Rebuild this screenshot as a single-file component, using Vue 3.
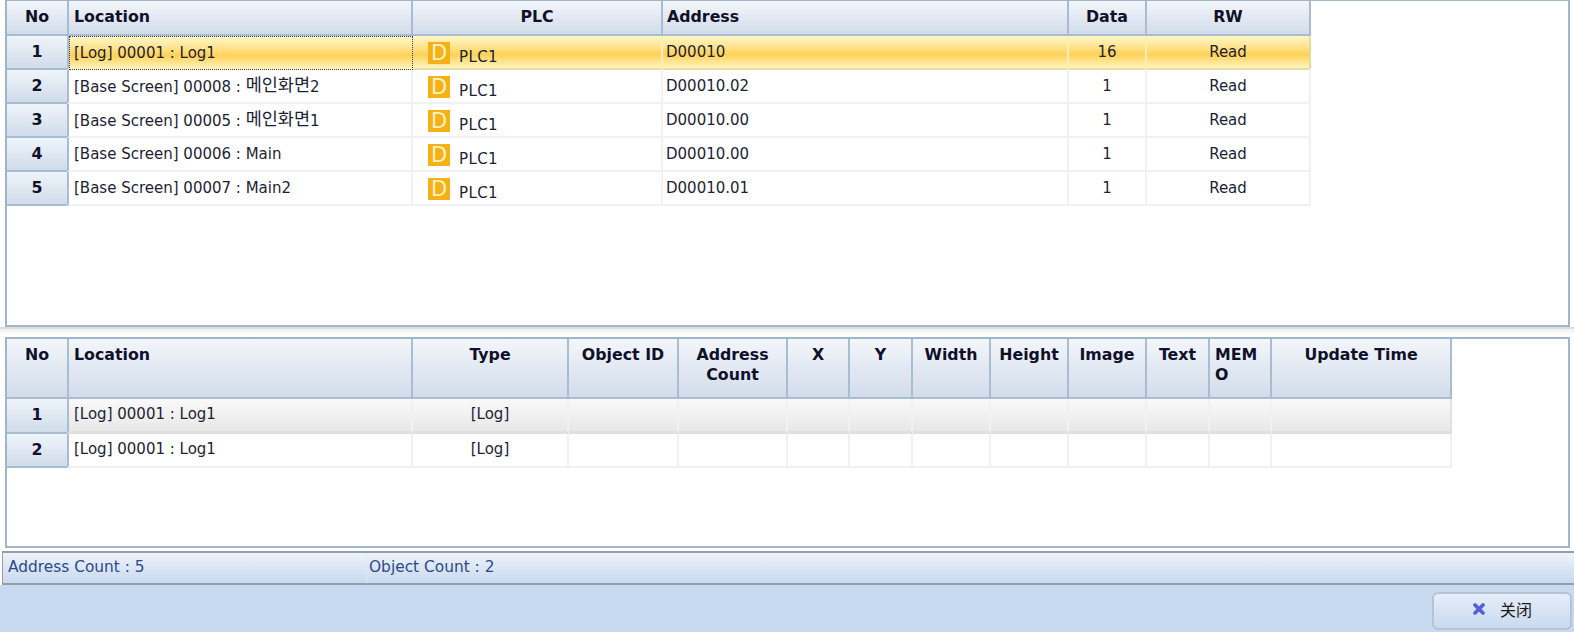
<script setup>
const topColumns = [
  { label: 'No', cls: 'center' },
  { label: 'Location', cls: 'left' },
  { label: 'PLC', cls: 'center' },
  { label: 'Address', cls: 'left addr' },
  { label: 'Data', cls: 'center' },
  { label: 'RW', cls: 'center' }
]
const topRows = [
  { no: 1, location: '[Log] 00001 : Log1', ko: '', tail: '', address: 'D00010', data: '16', rw: 'Read' },
  { no: 2, location: '[Base Screen] 00008 : ', ko: '메인화면', tail: '2', address: 'D00010.02', data: '1', rw: 'Read' },
  { no: 3, location: '[Base Screen] 00005 : ', ko: '메인화면', tail: '1', address: 'D00010.00', data: '1', rw: 'Read' },
  { no: 4, location: '[Base Screen] 00006 : Main', ko: '', tail: '', address: 'D00010.00', data: '1', rw: 'Read' },
  { no: 5, location: '[Base Screen] 00007 : Main2', ko: '', tail: '', address: 'D00010.01', data: '1', rw: 'Read' }
]
const bottomColumns = [
  { label: 'No', cls: 'center' },
  { label: 'Location', cls: 'left' },
  { label: 'Type', cls: 'center' },
  { label: 'Object ID', cls: 'center' },
  { label: 'Address Count', cls: 'center' },
  { label: 'X', cls: 'center' },
  { label: 'Y', cls: 'center' },
  { label: 'Width', cls: 'center' },
  { label: 'Height', cls: 'center' },
  { label: 'Image', cls: 'center' },
  { label: 'Text', cls: 'center' },
  { label: 'MEM O', cls: 'left memo' },
  { label: 'Update Time', cls: 'center' }
]
const bottomRows = [1, 2]
const emptyCells = Array.from({ length: 9 }, (_, i) => i)
</script>

<template>
  <div class="window">
    <section class="panel panel-top">
      <div class="grid grid-top">
        <div v-for="c in topColumns" :key="c.label" class="head" :class="c.cls">{{ c.label }}</div>
        <template v-for="(r, i) in topRows" :key="r.no">
          <div class="no">{{ r.no }}</div>
          <div class="cell first" :class="{ sel: i === 0, focus: i === 0 }">
            <span class="loc">{{ r.location }}<span v-if="r.ko" class="ko">{{ r.ko }}</span>{{ r.tail }}</span>
          </div>
          <div class="cell plc" :class="{ sel: i === 0 }">
            <span class="badge">D</span><span class="plc-name">PLC1</span>
          </div>
          <div class="cell address" :class="{ sel: i === 0 }">{{ r.address }}</div>
          <div class="cell center" :class="{ sel: i === 0 }">{{ r.data }}</div>
          <div class="cell center" :class="{ sel: i === 0, 'sel-end': i === 0 }">{{ r.rw }}</div>
        </template>
      </div>
    </section>

    <div class="splitter"></div>

    <section class="panel panel-bottom">
      <div class="grid grid-bottom">
        <div v-for="c in bottomColumns" :key="c.label" class="head tall" :class="c.cls">{{ c.label }}</div>
        <template v-for="n in bottomRows" :key="n">
          <div class="no">{{ n }}</div>
          <div class="cell first" :class="{ grey: n === 1 }">[Log] 00001 : Log1</div>
          <div class="cell center" :class="{ grey: n === 1 }">[Log]</div>
          <div
            v-for="e in emptyCells"
            :key="e"
            class="cell"
            :class="{ grey: n === 1 }"
          ></div>
          <div class="cell" :class="{ grey: n === 1, 'grey-end': n === 1 }"></div>
        </template>
      </div>
    </section>

    <div class="status">
      <div class="status-a">Address Count : 5</div>
      <div class="status-b">Object Count : 2</div>
    </div>

    <footer class="footer">
      <button class="close" type="button">
        <svg class="x" viewBox="0 0 14 14" width="14" height="14" aria-hidden="true">
          <path d="M3 3 L11 11 M11 3 L3 11" stroke="#5860d8" stroke-width="3.8" stroke-linecap="round" fill="none" />
        </svg>
        <span>关闭</span>
      </button>
    </footer>
  </div>
</template>

<style>
html, body { margin: 0; background: #fff; overflow: hidden; }
</style>

<style scoped>
.window {
  width: 1574px;
  height: 632px;
  display: flex;
  flex-direction: column;
  background: #fff;
  font-family: "DejaVu Sans", "Noto Sans CJK KR", sans-serif;
  font-size: 15px;
  color: #1e1e34;
  overflow: hidden;
}
.panel {
  margin: 0 4px 0 5px;
  background: #fff;
  border: 2px solid #9fb5cb;
  box-sizing: border-box;
  flex: none;
}
.panel-top { height: 327px; border-top-width: 1px; }
.panel-bottom { height: 211px; }
.splitter {
  height: 10px;
  flex: none;
  background: linear-gradient(#dcdcdc 0 2px, #f0f0f0 2px, #fff 8px);
}
.grid { display: grid; }
.grid-top {
  grid-template-columns: 62px 344px 250px 406px 78px 164px;
  grid-template-rows: 35px repeat(5, 34px);
  width: max-content;
}
.grid-bottom {
  grid-template-columns: 62px 344px 156px 110px 109px 62px 63px 78px 78px 78px 63px 62px 180px;
  grid-template-rows: 60px 35px 34px;
  width: max-content;
}
.head {
  box-sizing: border-box;
  background: linear-gradient(#f3f6fb, #d2dcea);
  border-right: 2px solid #a9bdd2;
  border-bottom: 2px solid #a9bdd2;
  font-weight: 700;
  font-size: 15.8px;
  line-height: 20px;
  color: #10102a;
  padding: 6px 5px 0;
}
.head.left { text-align: left; }
.head.center { text-align: center; }
.head.addr { padding-left: 4px; }
.head.memo { word-break: break-all; padding-right: 0; }
.no {
  box-sizing: border-box;
  background: linear-gradient(#eff4fa, #d0dcea);
  border-right: 2px solid #a9bdd2;
  border-bottom: 2px solid #a9bdd2;
  border-radius: 0 0 3px 0;
  font-weight: 700;
  font-size: 15.8px;
  line-height: 32px;
  text-align: center;
  color: #10102a;
}
.cell {
  box-sizing: border-box;
  display: flex;
  align-items: center;
  padding: 0 0 2px 4px;
  border-right: 2px solid #eff1f5;
  border-bottom: 2px solid #eff1f5;
  white-space: pre;
  min-width: 0;
}
.grid-top .cell { padding-bottom: 0; }
.cell.first { padding-left: 5px; }
.cell.address { padding-left: 3px; }
.cell.center { justify-content: center; padding-left: 0; }
.ko { font-family: "Noto Sans CJK KR", sans-serif; font-size: 17.5px; line-height: 1; position: relative; top: -1px; }
.loc { white-space: pre; }
.sel {
  background: linear-gradient(#fff6c8, #ffe592 32%, #ffd257 58%, #ffe89c 85%, #fff4bf);
  border-bottom: 2px solid #e8e0a0;
  border-right-color: #fbeeb8;
}
.sel-end { border-right: 2px solid #e3dc98; border-radius: 0 3px 3px 0; }
.cell.focus { border: 1px dotted #3a3a50; padding-left: 4px; }
.grey {
  background: linear-gradient(#f9f9f9, #e8e8e8);
  border-bottom: 3px solid #dfdfdf;
  border-right-color: #f1f1f1;
}
.grey-end { border-right: 2px solid #e2e2e2; }
.grid-top .cell.plc { padding-left: 15px; }
.badge {
  width: 22px;
  height: 22px;
  flex: none;
  margin-top: 2px;
  background: #f6b117;
  color: #fff3c4;
  font-family: "DejaVu Sans", sans-serif;
  font-size: 21px;
  line-height: 22px;
  text-align: center;
}
.plc-name { margin-left: 9px; margin-top: 10px; letter-spacing: 0.4px; }
.status {
  flex: none;
  box-sizing: border-box;
  height: 34px;
  margin: 3px 0 0 2px;
  display: flex;
  background: linear-gradient(#edf3fb, #c8d9ef);
  border-top: 2px solid #949ea8;
  border-bottom: 2px solid #949ea8;
  border-left: 1px solid #949ea8;
  color: #2e4a88;
  font-size: 15.4px;
  line-height: 28px;
}
.status-a { width: 364px; padding-left: 5px; box-sizing: border-box; border-right: 1px solid #dfe9f6; }
.status-b { padding-left: 2px; }
.footer {
  flex: 1;
  background: #c8daef;
  display: flex;
  justify-content: flex-end;
  align-items: flex-start;
  padding: 7px 2px 0 0;
}
.close {
  width: 140px;
  height: 38px;
  box-sizing: border-box;
  display: flex;
  align-items: center;
  justify-content: center;
  gap: 14px;
  padding: 0 0 5px;
  border: 2px solid #b4c3d6;
  border-radius: 6px;
  background: linear-gradient(#e6eefa, #c9d9ee);
  font-family: "Noto Sans CJK SC", sans-serif;
  font-size: 16px;
  color: #1a1a1a;
}
</style>
